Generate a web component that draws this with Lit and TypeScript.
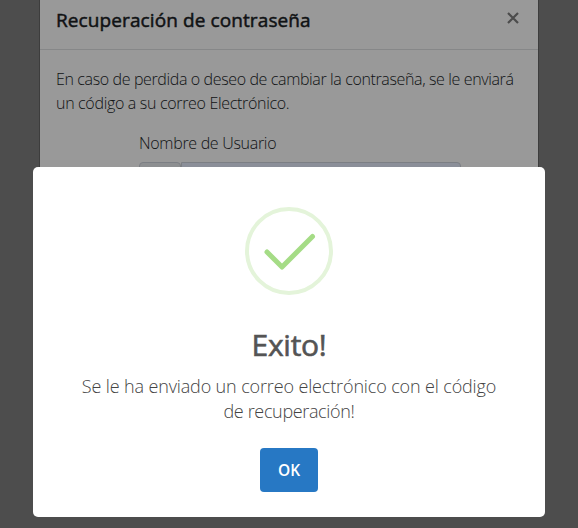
import { LitElement, html, css } from "lit";
import { customElement } from "lit/decorators.js";

@customElement("recovery-dialog")
class RecoveryDialog extends LitElement {
  static styles = css`
    :host { display: block; box-sizing: border-box; width: 500px; height: 480px; margin: 0 auto; background: #999; border: solid #3d3d3d; border-width: 0 1px; color: #101214; }
    header { display: flex; justify-content: space-between; box-sizing: border-box; height: 50px; padding: 5px 19px 0 16px; border-bottom: 1px solid #868788; }
    h5 { margin: 0; font-size: 19px; font-weight: 400; line-height: 30px; letter-spacing: 0.1px; white-space: nowrap; -webkit-text-stroke: 0.5px #101214; }
    .close { width: 12px; height: 12px; margin-top: 7px; }
    .body { padding: 17px 16px; font-size: 16px; line-height: 24px; font-weight: 300; }
    p { margin: 0 0 16px; white-space: nowrap; }
    .first { letter-spacing: -0.37px; }
    .second { letter-spacing: -0.32px; }
    .name { letter-spacing: -0.3px; }
    .form { width: 322px; margin-left: 83px; }
    .label { display: block; height: 31px; }
    .group { display: flex; height: 38px; }
    .icon, .input { box-sizing: border-box; border: 1px solid #7c7f84; }
    .icon { width: 42px; border-radius: 4px; background: #8d8f91; }
    .input { flex: 1; border-radius: 0 4px 4px 0; background: #8b8f99; }
  `;
  render() {
    return html`
      <header>
        <h5>Recuperación de contraseña</h5>
        <svg class="close" viewBox="0 0 12 12"><path d="M1 1 11 11M11 1 1 11" stroke="#4c4c4c" stroke-width="2.2" fill="none" /></svg>
      </header>
      <div class="body">
        <p><span class="first">En caso de perdida o deseo de cambiar la contraseña, se le enviará</span><br /><span class="second">un código a su correo Electrónico.</span></p>
        <div class="form">
          <span class="label"><span class="name">Nombre de Usuario</span></span>
          <div class="group"><span class="icon"></span><span class="input"></span></div>
        </div>
      </div>`;
  }
}

@customElement("success-alert")
class SuccessAlert extends LitElement {
  static styles = css`
    :host { display: flex; flex-direction: column; align-items: center; box-sizing: border-box; width: 512px; height: 350px; padding-top: 40px; border-radius: 5px; background: #fff; color: #545454; }
    svg { display: block; width: 88px; height: 88px; }
    h2 { margin: 29px 0 0; font-size: 30px; font-weight: 400; line-height: 41px; letter-spacing: -0.3px; white-space: nowrap; -webkit-text-stroke: 0.6px #545454; }
    .message { margin: 9px 0 0; font-size: 18px; font-weight: 300; line-height: 25px; letter-spacing: -0.14px; text-align: center; white-space: nowrap; color: #444; }
    .two { letter-spacing: -0.35px; }
    button { margin-top: 24px; padding: 1px 0 0; width: 58px; height: 44px; border: 0; border-radius: 4px; background: #2778c4; color: #fff; font: 600 15.5px/43px "Open Sans", sans-serif; }
  `;
  render() {
    return html`
      <svg viewBox="0 0 88 88" fill="none">
        <circle cx="44" cy="44" r="42" stroke="#e4f4da" stroke-width="4" />
        <path d="M22 45 37 60 67.5 29.5" stroke="#a5dc86" stroke-width="5" stroke-linecap="round" stroke-linejoin="round" />
      </svg>
      <h2>Exito!</h2>
      <div class="message"><span class="one">Se le ha enviado un correo electrónico con el código</span><br /><span class="two">de recuperación!</span></div>
      <button>OK</button>`;
  }
}

@customElement("app-root")
class AppRoot extends LitElement {
  static styles = css`
    :host { display: block; position: relative; width: 578px; height: 528px; overflow: hidden; background: #4d4d4d; font-family: "Open Sans", "Noto Sans", sans-serif; }
    success-alert { position: absolute; left: 33px; top: 167px; }
  `;
  render() {
    return html`<recovery-dialog></recovery-dialog><success-alert></success-alert>`;
  }
}
